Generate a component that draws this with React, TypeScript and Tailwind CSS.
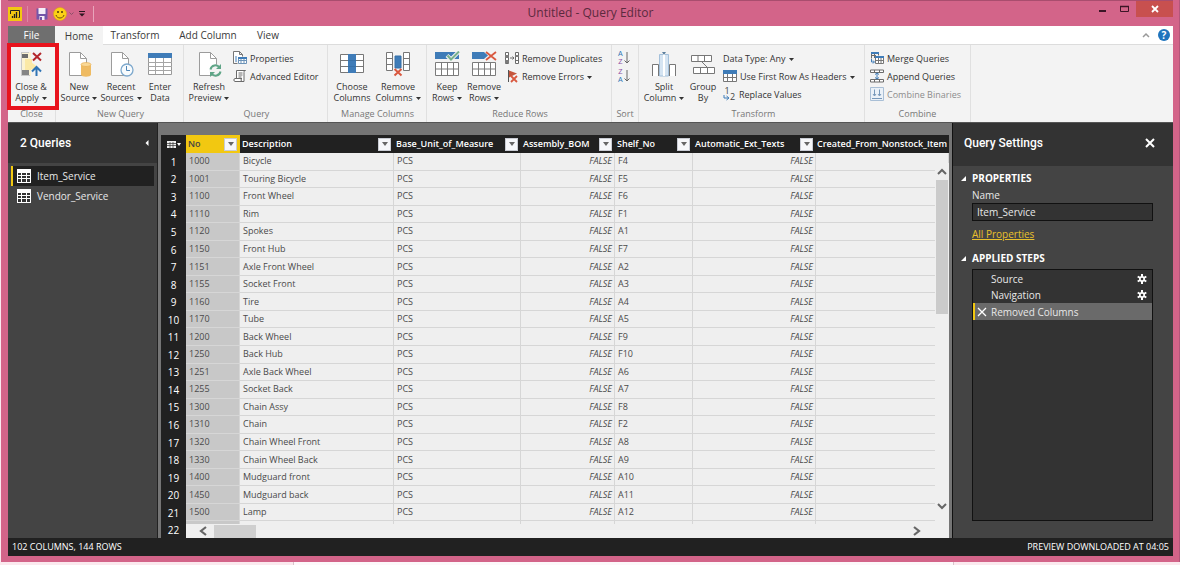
import type { ReactNode } from "react";

const BLUE = "#3f7cb8";
const INK = "#6b6b6b";

const ITEMS: [string, string, string][] = [
  ["1000", "Bicycle", "F4"],
  ["1001", "Touring Bicycle", "F5"],
  ["1100", "Front Wheel", "F6"],
  ["1110", "Rim", "F1"],
  ["1120", "Spokes", "A1"],
  ["1150", "Front Hub", "F7"],
  ["1151", "Axle Front Wheel", "A2"],
  ["1155", "Socket Front", "A3"],
  ["1160", "Tire", "A4"],
  ["1170", "Tube", "A5"],
  ["1200", "Back Wheel", "F9"],
  ["1250", "Back Hub", "F10"],
  ["1251", "Axle Back Wheel", "A6"],
  ["1255", "Socket Back", "A7"],
  ["1300", "Chain Assy", "F8"],
  ["1310", "Chain", "F2"],
  ["1320", "Chain Wheel Front", "A8"],
  ["1330", "Chain Wheel Back", "A9"],
  ["1400", "Mudguard front", "A10"],
  ["1450", "Mudguard back", "A11"],
  ["1500", "Lamp", "A12"],
];

const COLUMNS = [
  "No",
  "Description",
  "Base_Unit_of_Measure",
  "Assembly_BOM",
  "Shelf_No",
  "Automatic_Ext_Texts",
  "Created_From_Nonstock_Item",
];

function Caret() {
  return (
    <svg width="5" height="3" viewBox="0 0 5 3" className="ml-[3px] inline-block align-middle">
      <path d="M0 0h5L2.500 3z" fill="currentColor" />
    </svg>
  );
}

/* ---------- large ribbon icons ---------- */

function CloseApplyIcon() {
  return (
    <svg width="24" height="26" viewBox="0 0 24 26">
      <path d="M2 1h10v10l5 3v5h-5v6H2z" fill="#fbf3d3" />
      <path d="M6 8h7v4l4 3v3h-5v1H6z" fill="#fbe9a6" />
      <path d="M2.500 1v24M2 1.500h8M2 24.500h9" stroke="#c9c9c9" fill="none" />
      <path d="M3 3h6v4H3z" fill="#6d6d6d" />
      <path d="M3 19h7v5H3z" fill="#858585" />
      <path d="M14 2l8 7.500M22 2l-8 7.500" stroke="#b3262a" strokeWidth="2" />
      <path d="M17.500 25v-8M13 20.500l4.500-4.500 4.500 4.500" stroke="#2f74b5" strokeWidth="2" fill="none" />
    </svg>
  );
}

function PagePath() {
  return (
    <>
      <path d="M3.500 1.500h11l6 6v17h-17z" fill="#fff" stroke="#9c9c9c" />
      <path d="M14.500 1.500v6h6" fill="none" stroke="#9c9c9c" />
    </>
  );
}

function NewSourceIcon() {
  return (
    <svg width="26" height="26" viewBox="0 0 26 26">
      <PagePath />
      <path d="M15 13.500v10c0 3 10 3 10 0v-10z" fill="#efbb62" />
      <ellipse cx="20" cy="13.500" rx="5" ry="2" fill="#f9d897" stroke="#e5a844" strokeWidth=".6" />
    </svg>
  );
}

function RecentSourcesIcon() {
  return (
    <svg width="26" height="26" viewBox="0 0 26 26">
      <PagePath />
      <circle cx="19" cy="19" r="6" fill="#f8fbfd" stroke="#7ea9cd" strokeWidth="1.300" />
      <path d="M18.500 15v4.500h3.500" fill="none" stroke="#4f86b8" />
    </svg>
  );
}

function EnterDataIcon() {
  return (
    <svg width="26" height="26" viewBox="0 0 26 26">
      <path d="M1.500 2.500h23v21h-23z" fill="#fff" stroke="#999" />
      <path d="M1 2h24v5H1z" fill={BLUE} />
      <path d="M1 11.500h24M1 15.500h24M1 19.500h24M8.500 7v16M16.500 7v16" stroke="#a5a5a5" />
    </svg>
  );
}

function RefreshIcon() {
  return (
    <svg width="26" height="26" viewBox="0 0 26 26">
      <PagePath />
      <circle cx="19.500" cy="19.500" r="6" fill="#f3f3f3" />
      <path d="M14.500 18.500a5 5 0 0 1 9-2M24.500 20.500a5 5 0 0 1-9 2" fill="none" stroke="#5fa587" strokeWidth="2" />
      <path d="M25 13v5h-5zM14 26v-5h5z" fill="#5fa587" />
    </svg>
  );
}

function ChooseColumnsIcon() {
  return (
    <svg width="26" height="26" viewBox="0 0 26 26">
      <path d="M1.500 3.500h23v18h-23zM1 9.500h24M1 15.500h24" fill="#fff" stroke="#777" />
      <path d="M9 3h8v19H9z" fill={BLUE} />
      <path d="M9 9.500h8M9 15.500h8" stroke="#3670a8" />
    </svg>
  );
}

function RemoveColumnsIcon() {
  return (
    <svg width="26" height="26" viewBox="0 0 26 26">
      <path d="M1.500 1.500h6v18h-6zM1 7.500h7M1 13.500h7M18.500 1.500h6v18h-6zM18 7.500h7M18 13.500h7" fill="#fff" stroke="#777" />
      <path d="M10 5h6v12h-6z" fill={BLUE} stroke="#3670a8" />
      <path d="M9.500 18l7 6.500M16.500 18l-7 6.500" stroke="#d9583f" strokeWidth="2" />
    </svg>
  );
}

function RowsIcon({ keep }: { keep?: boolean }) {
  return (
    <svg width="26" height="26" viewBox="0 0 26 26">
      <path d={keep ? "M1 1h24v7H1z" : "M1 1h12l4 3.500L13 8H1z"} fill={BLUE} />
      <path d="M1.500 11.500h23v13h-23zM1 18h24M7.500 11v14M13.500 11v14M19.500 11v14" fill="#fff" stroke="#7b7b7b" />
      {keep ? (
        <>
          <path d="M13 4.500l4 4 8-8" fill="none" stroke="#f3f3f3" strokeWidth="4" />
          <path d="M13.500 4.500l3.500 4 8-8" fill="none" stroke="#78b08c" strokeWidth="2" />
        </>
      ) : (
        <path d="M15 1l10 8M25 1l-10 8" stroke="#d9583f" strokeWidth="1.800" />
      )}
    </svg>
  );
}

function SplitColumnIcon() {
  return (
    <svg width="26" height="26" viewBox="0 0 26 26">
      <path d="M1.500 25V13.500h6V25M18.500 25V13.500h6V25" fill="#fff" stroke="#777" />
      <path d="M8.500 3.500h9V25h-9z" fill="#d5e4f2" stroke="#a4c0da" />
      <path d="M13 3v22" stroke="#fff" strokeWidth="2" />
      <path d="M11 1h4l-2 3z" fill="#5c7f9e" />
    </svg>
  );
}

function GroupByIcon() {
  return (
    <svg width="26" height="26" viewBox="0 0 26 26">
      <path d="M1.500 4.500h20v6h-20zM8 4v7M14.500 4v7M3.500 16.500h21v6h-21zM10.500 16v7M17.500 16v7" fill="#fff" stroke="#777" />
      <path d="M12 11l5 5" stroke="#777" />
    </svg>
  );
}

/* ---------- small ribbon icons ---------- */

function PropertiesIcon() {
  return (
    <svg width="14" height="14" viewBox="0 0 14 14">
      <path d="M.5 12.500V.5h6l3 3v2M.5 12.500h4M6.500 .5v3h3" fill="#fff" stroke="#777" />
      <path d="M2 6h2M2 8h2M2 10h2" stroke={BLUE} />
      <path d="M5.500 6.500h8v6h-8zM5 9.500h8M8 8v5M11 8v5" fill="#fff" stroke="#6d93b8" />
      <path d="M5 6h9v2H5z" fill={BLUE} />
    </svg>
  );
}

function ScriptIcon() {
  return (
    <svg width="14" height="14" viewBox="0 0 14 14">
      <path d="M3.500 9V1.500h9c-1 0-1.500.5-1.500 2v9H2c-1.500 0-1.500-3 0-3h7c-1.500 0-1 3 0 3" fill="#fff" stroke={INK} />
      <path d="M5.500 4h4M5.500 6h4M5.500 8h3" stroke={INK} />
    </svg>
  );
}

function DuplicatesIcon() {
  return (
    <svg width="14" height="14" viewBox="0 0 14 14">
      <path d="M.5 1.500h3v11h-3zM10.500 1.500h3v11h-3z" fill="#fff" stroke={INK} />
      <path d="M0 4h4v3H0zM0 9h4v3H0zM10 4h4v2h-4z" fill="#7b7b7b" />
      <path d="M10 9.500h4M5 7h4M7.500 5.500L9 7 7.500 8.500" fill="none" stroke={INK} />
    </svg>
  );
}

function ErrorsIcon() {
  return (
    <svg width="14" height="14" viewBox="0 0 14 14">
      <path d="M3.500 1v12" stroke="#555" />
      <path d="M4 1.500l8 3-8 4z" fill="#c4553c" />
      <path d="M6 7l6 6M12 7l-6 6" stroke="#d9583f" strokeWidth="1.800" />
    </svg>
  );
}

function SortIcon({ descending }: { descending?: boolean }) {
  return (
    <span className="flex h-[16px] items-center gap-px">
      <span className="flex flex-col font-['Liberation_Sans',sans-serif] text-[7px] leading-[8px]">
        <span className={descending ? "text-[#8d4fa3]" : "text-[#2f74b5]"}>{descending ? "Z" : "A"}</span>
        <span className={descending ? "text-[#2f74b5]" : "text-[#8d4fa3]"}>{descending ? "A" : "Z"}</span>
      </span>
      <svg width="6" height="14" viewBox="0 0 6 14">
        <path d="M3 1v11M.5 9.500L3 12l2.500-2.500" fill="none" stroke="#666" />
      </svg>
    </span>
  );
}

function HeadersIcon() {
  return (
    <svg width="14" height="14" viewBox="0 0 14 14">
      <path d="M.5 1.500h13v11H.5zM0 8.500h14M4.500 5v8M9.500 5v8" fill="#fff" stroke="#777" />
      <path d="M0 1h14v4H0z" fill={BLUE} />
    </svg>
  );
}

function ReplaceIcon() {
  return (
    <span className="flex h-[14px] w-[13px] text-[9px] leading-[8px] text-[#444]">
      <span className="flex flex-col">
        <span className="pl-px">1</span>
        <svg width="7" height="6" viewBox="0 0 7 6">
          <path d="M1 0v3h4M3.500 1L6 3 3.500 5" fill="none" stroke={BLUE} />
        </svg>
      </span>
      <span className="self-end">2</span>
    </span>
  );
}

function MergeIcon() {
  return (
    <svg width="14" height="14" viewBox="0 0 14 14">
      <path d="M1.500 7.500v-6h7v3M1 4.500h5M4.500 2v5" fill="none" stroke={INK} />
      <path d="M1 1h8v2H1z" fill={BLUE} />
      <path d="M5.500 5.500h8v7h-8zM5 9.500h8M8.500 7v6M11 7v6" fill="#fff" stroke="#777" />
      <path d="M5 5h9v2H5z" fill={BLUE} />
      <path d="M1.500 8v3H4M3 9.500L4.500 11 3 12.500" fill="none" stroke={BLUE} />
    </svg>
  );
}

function AppendIcon() {
  return (
    <svg width="14" height="14" viewBox="0 0 14 14">
      <path d="M.5 1h13v2.500H.5zM.5 10.500h13V13H.5zM4.500 1v2M9.500 1v2M4.500 11v2M9.500 11v2" fill="#fff" stroke={INK} />
      <path d="M7 4v6M5 5.500L7 4l2 1.500M5 8.500L7 10l2-1.500" fill="none" stroke={BLUE} />
    </svg>
  );
}

function BinariesIcon() {
  return (
    <svg width="14" height="14" viewBox="0 0 14 14">
      <path d="M.5 .5h13v13H.5z" fill="#eaf1f8" stroke="#a9bfd6" />
      <path d="M4.500 2.500v6M3 7l1.500 2L6 7M9.500 2.500v6M8 7l1.500 2L11 7M2 11.500h10" fill="none" stroke="#7798ba" />
    </svg>
  );
}

/* ---------- ribbon ---------- */

function BigButton({
  icon,
  lines,
  menu,
  className,
}: {
  icon: ReactNode;
  lines: [string, string];
  menu?: boolean;
  className: string;
}) {
  return (
    <button type="button" className={`flex flex-col items-center whitespace-nowrap pt-[6px] ${className}`}>
      {icon}
      <span className="mt-[4px]">{lines[0]}</span>
      <span>
        {lines[1]}
        {menu && <Caret />}
      </span>
    </button>
  );
}

function SmallButton({
  icon,
  label,
  menu,
  disabled,
}: {
  icon?: ReactNode;
  label: string;
  menu?: boolean;
  disabled?: boolean;
}) {
  return (
    <button
      type="button"
      disabled={disabled}
      className="flex h-[18px] items-center gap-[3px] whitespace-nowrap disabled:text-[#8c8c8c]"
    >
      {icon}
      <span>
        {label}
        {menu && <Caret />}
      </span>
    </button>
  );
}

function Group({ label, className, children }: { label: string; className: string; children: ReactNode }) {
  return (
    <section className={`relative flex shrink-0 flex-col border-r border-[#e0e0e0] ${className}`}>
      <div className="flex flex-1">{children}</div>
      <h2 className="pb-[3px] text-center text-[#777]">{label}</h2>
    </section>
  );
}

function Ribbon() {
  return (
    <div className="flex h-[77px] shrink-0 bg-[#f3f3f3] text-[9px] leading-[11px] text-[#333]">
      <Group label="Close" className="w-[48px]">
        <BigButton icon={<CloseApplyIcon />} lines={["Close &", "Apply"]} menu className="w-[46px]" />
        <div className="pointer-events-none absolute -left-px -top-[2px] z-10 h-[67px] w-[52px] border-4 border-[#e8131d]" />
      </Group>
      <Group label="New Query" className="w-[128px] pl-[2px]">
        <BigButton icon={<NewSourceIcon />} lines={["New", "Source"]} menu className="w-[42px]" />
        <BigButton icon={<RecentSourcesIcon />} lines={["Recent", "Sources"]} menu className="w-[42px]" />
        <BigButton icon={<EnterDataIcon />} lines={["Enter", "Data"]} className="w-[36px]" />
      </Group>
      <Group label="Query" className="w-[144px] pl-[2px]">
        <BigButton icon={<RefreshIcon />} lines={["Refresh", "Preview"]} menu className="w-[46px]" />
        <div className="pl-px pt-[4px]">
          <SmallButton icon={<PropertiesIcon />} label="Properties" />
          <SmallButton icon={<ScriptIcon />} label="Advanced Editor" />
        </div>
      </Group>
      <Group label="Manage Columns" className="w-[99px] pl-px">
        <BigButton icon={<ChooseColumnsIcon />} lines={["Choose", "Columns"]} className="w-[46px]" />
        <BigButton icon={<RemoveColumnsIcon />} lines={["Remove", "Columns"]} menu className="w-[46px]" />
      </Group>
      <Group label="Reduce Rows" className="w-[185px] pl-[2px]">
        <BigButton icon={<RowsIcon keep />} lines={["Keep", "Rows"]} menu className="w-[36px]" />
        <BigButton icon={<RowsIcon />} lines={["Remove", "Rows"]} menu className="w-[38px]" />
        <div className="pl-[2px] pt-[4px]">
          <SmallButton icon={<DuplicatesIcon />} label="Remove Duplicates" />
          <SmallButton icon={<ErrorsIcon />} label="Remove Errors" menu />
        </div>
      </Group>
      <Group label="Sort" className="w-[27px]">
        <div className="flex flex-col gap-[2px] pl-[6px] pt-[5px]">
          <button type="button" aria-label="Sort ascending">
            <SortIcon />
          </button>
          <button type="button" aria-label="Sort descending">
            <SortIcon descending />
          </button>
        </div>
      </Group>
      <Group label="Transform" className="w-[226px] pl-[4px]">
        <BigButton icon={<SplitColumnIcon />} lines={["Split", "Column"]} menu className="w-[42px]" />
        <BigButton icon={<GroupByIcon />} lines={["Group", "By"]} className="w-[36px]" />
        <div className="pl-[2px] pt-[4px]">
          <SmallButton label="Data Type: Any" menu />
          <SmallButton icon={<HeadersIcon />} label="Use First Row As Headers" menu />
          <SmallButton icon={<ReplaceIcon />} label="Replace Values" />
        </div>
      </Group>
      <Group label="Combine" className="w-[106px]">
        <div className="pl-[5px] pt-[4px]">
          <SmallButton icon={<MergeIcon />} label="Merge Queries" />
          <SmallButton icon={<AppendIcon />} label="Append Queries" />
          <SmallButton icon={<BinariesIcon />} label="Combine Binaries" disabled />
        </div>
      </Group>
    </div>
  );
}

/* ---------- window chrome ---------- */

function TitleBar() {
  return (
    <header className="grid h-[26px] shrink-0 grid-cols-[1fr_auto_1fr] items-center border-t border-[#a94d6e]">
      <div className="flex items-center">
        <svg width="14" height="14" viewBox="0 0 14 14">
          <path d="M0 0h14v14H0z" fill="#f2c811" />
          <path d="M2.500 7V3.500h9v7h-1" fill="none" stroke="#222" />
          <path d="M4.500 11V9M6.500 11V7M8.500 11V5" stroke="#222" strokeWidth="1.300" />
        </svg>
        <span className="ml-[5px] h-4 w-px bg-[#dd88a5]" />
        <button type="button" aria-label="Save" className="ml-2">
          <svg width="12" height="12" viewBox="0 0 12 12">
            <path d="M.5 .5h11v11H.5z" fill="#7556a8" />
            <path d="M2.500 0h7v6h-7zM3.500 8h5v4h-5z" fill="#f6eff8" />
            <path d="M4 9h2v3H4z" fill="#7556a8" />
          </svg>
        </button>
        <button type="button" aria-label="Send a smile" className="ml-[5px] flex items-center gap-[2px]">
          <svg width="14" height="14" viewBox="0 0 14 14">
            <circle cx="7" cy="7" r="6.500" fill="#fcd116" stroke="#d9a514" strokeWidth=".5" />
            <path d="M3 8c1 4 7 4 8 0" fill="none" stroke="#6b4a10" />
            <circle cx="5" cy="5" r="1" fill="#4b3510" />
            <circle cx="9" cy="5" r="1" fill="#4b3510" />
          </svg>
          <svg width="5" height="4" viewBox="0 0 5 4">
            <path d="M.5 .5l2 2 2-2" fill="none" stroke="#8a5068" />
          </svg>
        </button>
        <button type="button" aria-label="Customize toolbar" className="ml-[5px]">
          <svg width="6" height="6" viewBox="0 0 6 6">
            <path d="M0 .5h6" stroke="#2d1720" />
            <path d="M0 2.500h6l-3 3z" fill="#2d1720" />
          </svg>
        </button>
        <span className="ml-2 h-4 w-px bg-[#e8a5bb]" />
      </div>
      <h1 className="pb-px text-[12px] leading-4 text-[#5b2a3e]">Untitled - Query Editor</h1>
      <div className="flex justify-end self-start">
        <button type="button" aria-label="Minimize" className="mr-[13px]">
          <svg width="8" height="16" viewBox="0 0 8 16">
            <path d="M0 10h7" stroke="#3c1526" strokeWidth="2" />
          </svg>
        </button>
        <button type="button" aria-label="Maximize" className="mr-[6px]">
          <svg width="10" height="16" viewBox="0 0 10 16">
            <path d="M.5 5.500h8v5h-8z" fill="none" stroke="#3c1526" />
            <path d="M0 5.500h9" stroke="#3c1526" strokeWidth="1.500" />
          </svg>
        </button>
        <button type="button" aria-label="Close window" className="flex h-[16px] w-[37px] items-center justify-center bg-[#c8504f]">
          <svg width="8" height="8" viewBox="0 0 8 8">
            <path d="M1 1l6 6M7 1L1 7" stroke="#fff" strokeWidth="1.800" />
          </svg>
        </button>
      </div>
    </header>
  );
}

function TabStrip() {
  return (
    <nav className="flex h-[19px] shrink-0 items-stretch border-b border-[#dcdcdc] bg-white text-[10px] leading-[18px] text-[#3a3a3a]">
      <button type="button" className="w-[47px] bg-[#6f6f6f] text-white">File</button>
      <button type="button" className="-mb-px w-[48px] bg-[#f3f3f3]">Home</button>
      <button type="button" className="w-[64px]">Transform</button>
      <button type="button" className="w-[82px]">Add Column</button>
      <button type="button" className="w-[38px]">View</button>
      <div className="ml-auto flex items-center gap-2 pr-[3px]">
        <button type="button" aria-label="Collapse ribbon">
          <svg width="8" height="6" viewBox="0 0 8 6">
            <path d="M1 5l3-3 3 3" fill="none" stroke="#999" strokeWidth="1.500" />
          </svg>
        </button>
        <button
          type="button"
          aria-label="Help"
          className="flex h-3 w-3 items-center justify-center rounded-full bg-[#1f74bd] text-[10px] font-bold leading-3 text-white"
        >
          ?
        </button>
      </div>
    </nav>
  );
}

/* ---------- panes ---------- */

function TableGlyph() {
  return (
    <svg width="14" height="14" viewBox="0 0 14 14" className="shrink-0">
      <path d="M0 0h14v14H0z" fill="#fff" />
      <path d="M1 4h3v2H1zM5 4h4v2H5zM10 4h3v2h-3zM1 7h3v2H1zM5 7h4v2H5zM10 7h3v2h-3zM1 10h3v3H1zM5 10h4v3H5zM10 10h3v3h-3z" fill="#333" />
    </svg>
  );
}

function QueriesPane() {
  return (
    <aside className="w-[150px] shrink-0 border-r border-[#222] bg-[#444] text-white">
      <div className="flex h-[40px] items-center justify-between bg-[#333] pl-[12px] pr-2">
        <h2 className="font-[Roboto,sans-serif] text-[12px] font-medium leading-4">2 Queries</h2>
        <button type="button" aria-label="Collapse queries">
          <svg width="4" height="6" viewBox="0 0 4 6">
            <path d="M3.500 0v6L.5 3z" fill="#fff" />
          </svg>
        </button>
      </div>
      <ul className="px-[3px] pt-[3px] text-[10px] leading-[20px] text-[#e8e8e8]">
        <li>
          <button type="button" className="flex h-5 w-full items-center gap-[6px] border-l-2 border-[#f2c811] bg-[#212121] pl-1">
            <TableGlyph />
            Item_Service
          </button>
        </li>
        <li>
          <button type="button" className="flex h-5 w-full items-center gap-[6px] border-l-2 border-transparent pl-1">
            <TableGlyph />
            Vendor_Service
          </button>
        </li>
      </ul>
    </aside>
  );
}

function FilterButton({ column }: { column: string }) {
  return (
    <button
      type="button"
      aria-label={`Filter ${column}`}
      className="flex h-[13px] w-[13px] shrink-0 items-center justify-center border border-[#c9ccd4] bg-[#f6f7fa]"
    >
      <svg width="6" height="4" viewBox="0 0 6 4">
        <path d="M0 0h6L3 4z" fill="#666" />
      </svg>
    </button>
  );
}

function DataGrid() {
  const rows = [...ITEMS, null];
  return (
    <main className="relative min-w-0 flex-1 overflow-hidden border-r border-[#111] bg-[#757575] pl-[3px] pr-[3px] pt-[12px]">
      <div className="relative h-full overflow-hidden bg-[#efefef]">
        <table className="h-full w-full table-fixed border-separate border-spacing-0 whitespace-nowrap text-[9px] leading-[12px] text-[#4a4a4a]">
          <colgroup>
            <col className="w-[25px]" />
            <col className="w-[54px]" />
            <col className="w-[154px]" />
            <col className="w-[127px]" />
            <col className="w-[94px]" />
            <col className="w-[78px]" />
            <col className="w-[123px]" />
            <col />
          </colgroup>
          <thead>
            <tr className="h-[18px] bg-[#212121] text-left text-white">
              <th className="p-0">
                <button type="button" aria-label="Table options" className="flex w-full items-center justify-center gap-px">
                  <svg width="9" height="7" viewBox="0 0 9 7">
                    <path d="M0 0h9v7H0z" fill="#eee" />
                    <path d="M0 2.500h9M0 4.500h9M3 1v6M6 1v6" stroke="#333" strokeWidth=".7" />
                  </svg>
                  <svg width="4" height="3" viewBox="0 0 4 3">
                    <path d="M0 0h4L2 3z" fill="#fff" />
                  </svg>
                </button>
              </th>
              {COLUMNS.map((column, i) => (
                <th key={column} className={i === 0 ? "bg-[#f2c811] p-0 font-semibold text-[#444]" : "p-0 font-semibold"}>
                  <div className={i < 6 ? "flex items-center justify-between pl-[2px] pr-[3px]" : "pl-px"}>
                    <span>{column}</span>
                    {i < 6 && <FilterButton column={column} />}
                  </div>
                </th>
              ))}
            </tr>
          </thead>
          <tbody>
            {rows.map((row, i) => (
              <tr key={i} className="[&>td]:border-b [&>td]:border-r [&>td]:border-[#d6d6d6] [&>td]:py-0 [&>td]:pl-[3px] [&>td]:pr-[2px]">
                <th className="bg-[#212121] p-0 text-center text-[10px] font-normal text-white">{i + 1}</th>
                <td className="bg-[#c8c8c8]">{row?.[0]}</td>
                <td>{row?.[1]}</td>
                <td>{row && "PCS"}</td>
                <td className="text-right italic">{row && "FALSE"}</td>
                <td>{row?.[2]}</td>
                <td className="text-right italic">{row && "FALSE"}</td>
                <td />
              </tr>
            ))}
          </tbody>
        </table>
        <div className="absolute bottom-[14px] right-0 top-[28px] flex w-[14px] flex-col items-center bg-[#efefef]">
          <button type="button" aria-label="Scroll up" className="flex h-[17px] items-center">
            <svg width="10" height="7" viewBox="0 0 10 7">
              <path d="M1 6l4-4 4 4" fill="none" stroke="#666" strokeWidth="2" />
            </svg>
          </button>
          <div className="h-[134px] w-[12px] bg-[#cbcbcb]" />
          <button type="button" aria-label="Scroll down" className="mt-auto flex h-[36px] items-center">
            <svg width="10" height="7" viewBox="0 0 10 7">
              <path d="M1 1l4 4 4-4" fill="none" stroke="#666" strokeWidth="2" />
            </svg>
          </button>
        </div>
        <div className="absolute bottom-0 left-[25px] right-0 flex h-[14px] items-center bg-[#efefef] pl-[13px] pr-[28px]">
          <button type="button" aria-label="Scroll left">
            <svg width="8" height="10" viewBox="0 0 8 10">
              <path d="M7 1L2 5l5 4" fill="none" stroke="#666" strokeWidth="2.200" />
            </svg>
          </button>
          <div className="ml-[7px] h-[13px] w-[42px] bg-[#cfcfcf]" />
          <button type="button" aria-label="Scroll right" className="ml-auto">
            <svg width="8" height="10" viewBox="0 0 8 10">
              <path d="M1 1l5 4-5 4" fill="none" stroke="#666" strokeWidth="2.200" />
            </svg>
          </button>
        </div>
      </div>
    </main>
  );
}

function GearIcon() {
  return (
    <svg width="10" height="10" viewBox="0 0 10 10">
      <path d="M5 0v10M.7 2.500l8.600 5M9.300 2.500l-8.600 5" stroke="#fff" strokeWidth="2" />
      <circle cx="5" cy="5" r="3" fill="#fff" />
      <circle cx="5" cy="5" r="1.300" fill="#333" />
    </svg>
  );
}

function SectionTitle({ children }: { children: ReactNode }) {
  return (
    <h3 className="flex items-center gap-[6px] text-[10px] font-bold leading-[14px] text-white">
      <svg width="5" height="5" viewBox="0 0 5 5">
        <path d="M5 0v5H0z" fill="#fff" />
      </svg>
      {children}
    </h3>
  );
}

function SettingsPane() {
  return (
    <aside className="flex w-[220px] shrink-0 flex-col bg-[#444] text-[10px] text-[#e8e8e8]">
      <div className="flex h-[43px] shrink-0 items-center justify-between bg-[#333] pb-[3px] pl-[11px] pr-[18px] text-white">
        <h2 className="font-[Roboto,sans-serif] text-[12px] font-medium leading-4">Query Settings</h2>
        <button type="button" aria-label="Close settings">
          <svg width="10" height="10" viewBox="0 0 10 10">
            <path d="M1 1l8 8M9 1L1 9" stroke="#fff" strokeWidth="2" />
          </svg>
        </button>
      </div>
      <div className="flex flex-1 flex-col pb-[17px] pl-2 pr-5 pt-[5px]">
        <SectionTitle>PROPERTIES</SectionTitle>
        <div className="flex flex-col items-start pl-[11px]">
          <label htmlFor="query-name" className="mt-[3px] leading-[14px]">Name</label>
          <input
            id="query-name"
            defaultValue="Item_Service"
            className="mt-px h-[18px] w-full border border-[#111] bg-[#333] px-1 leading-4"
          />
          <a href="#all-properties" className="mt-[6px] leading-[14px] text-[#e9c02c] underline">All Properties</a>
        </div>
        <div className="mt-[10px]">
          <SectionTitle>APPLIED STEPS</SectionTitle>
        </div>
        <ul className="ml-[11px] mt-1 flex-1 border border-[#111] bg-[#333] pt-px leading-[16px]">
          {["Source", "Navigation"].map((step) => (
            <li key={step} className="flex h-[16px] items-center justify-between pl-[18px] pr-[5px]">
              <button type="button">{step}</button>
              <button type="button" aria-label={`Edit ${step}`}>
                <GearIcon />
              </button>
            </li>
          ))}
          <li className="flex h-[17px] items-center gap-[4px] border-l-2 border-[#f2c811] bg-[#6a6a6a] pl-[2px]">
            <button type="button" aria-label="Delete step">
              <svg width="10" height="10" viewBox="0 0 10 10">
                <path d="M1 1l8 8M9 1L1 9" stroke="#fff" strokeWidth="1.300" />
              </svg>
            </button>
            <button type="button">Removed Columns</button>
          </li>
        </ul>
      </div>
    </aside>
  );
}

export default function App() {
  return (
    <div className="flex h-screen flex-col bg-[#fbe9ee] font-['Open_Sans',sans-serif]">
      <div className="ml-px flex min-h-0 flex-1 flex-col border-r border-[#b3567a] bg-[#d36489] pb-[6px] pl-[7px] pr-[6px]">
        <TitleBar />
        <TabStrip />
        <Ribbon />
        <div className="flex min-h-0 flex-1 border-t border-[#555]">
          <QueriesPane />
          <DataGrid />
          <SettingsPane />
        </div>
        <footer className="flex h-[18px] shrink-0 items-center justify-between bg-[#212121] px-[4px] text-[9px] leading-3 text-white">
          <span>102 COLUMNS, 144 ROWS</span>
          <span>PREVIEW DOWNLOADED AT 04:05</span>
        </footer>
      </div>
      <div className="flex h-[3px] shrink-0">
        <div className="w-[294px] border-r border-[#d9c3ca]" />
        <div className="w-[660px] border-r border-[#d9c3ca] bg-[#fdf8fa]" />
      </div>
    </div>
  );
}
